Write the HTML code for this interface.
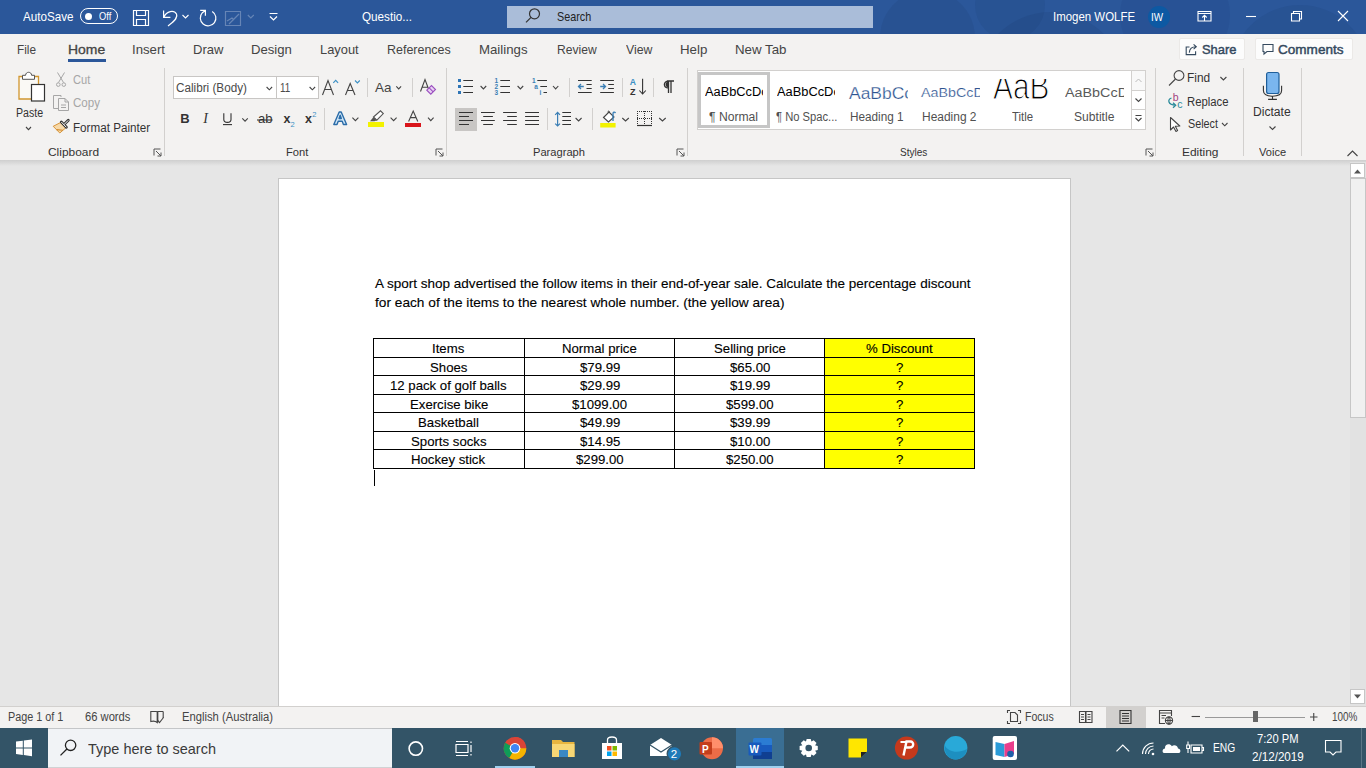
<!DOCTYPE html>
<html><head><meta charset="utf-8"><style>
*{margin:0;padding:0;box-sizing:border-box}
html,body{width:1366px;height:768px;overflow:hidden;background:#e6e6e6;font-family:"Liberation Sans",sans-serif}
.a{position:absolute}
.t{position:absolute;white-space:pre;transform-origin:0 0;font-family:"Liberation Sans",sans-serif}
.vs{position:absolute;width:1px;background:#d2d0ce}
svg{position:absolute;overflow:visible}

</style></head><body>
<div class="a" style="left:0;top:0;width:1366px;height:34px;background:#2b579a"></div>
<div class="a" style="left:0;top:0;width:1366px;height:34px;overflow:hidden">
<div class="a" style="left:880px;top:-10px;width:95px;height:95px;border-radius:50%;background:rgba(15,35,80,0.10)"></div>
<div class="a" style="left:975px;top:-30px;width:70px;height:70px;border-radius:50%;background:rgba(15,35,80,0.08)"></div>
<div class="a" style="left:976px;top:12px;width:150px;height:150px;border-radius:50%;background:rgba(15,35,80,0.10)"></div>
<div class="a" style="left:1120px;top:-40px;width:110px;height:110px;border-radius:50%;background:rgba(15,35,80,0.07)"></div>
<div class="a" style="left:1230px;top:5px;width:140px;height:140px;border-radius:50%;background:rgba(15,35,80,0.08)"></div>
</div>
<div class="a" style="left:507px;top:6px;width:366px;height:22px;background:#aabdd9"></div>
<div class="a" style="left:1147.5px;top:6px;width:22px;height:22px;border-radius:50%;background:#0d59a3"></div>
<div class="a" style="left:80px;top:8px;width:38px;height:16px;border:1.5px solid #fff;border-radius:8px"></div>
<div class="a" style="left:84.5px;top:12.5px;width:7px;height:7px;border-radius:50%;background:#fff"></div>
<div class="a" style="left:0;top:34px;width:1366px;height:126px;background:#f3f2f1"></div>
<div class="a" style="left:68px;top:59px;width:38px;height:3px;background:#2b579a"></div>
<div class="a" style="left:1179px;top:38px;width:66px;height:22px;background:#fcfcfc;border:1px solid #ebe9e7;border-radius:2px"></div>
<div class="a" style="left:1255px;top:38px;width:98px;height:22px;background:#fcfcfc;border:1px solid #ebe9e7;border-radius:2px"></div>
<div class="vs" style="left:164px;top:68px;height:88px"></div>
<div class="vs" style="left:446px;top:68px;height:88px"></div>
<div class="vs" style="left:687px;top:68px;height:88px"></div>
<div class="vs" style="left:1155px;top:68px;height:88px"></div>
<div class="vs" style="left:1243px;top:68px;height:88px"></div>
<div class="vs" style="left:1301px;top:68px;height:88px"></div>
<div class="a" style="left:173px;top:76px;width:146px;height:23px;background:#fff;border:1px solid #c8c6c4"></div>
<div class="vs" style="left:276px;top:77px;height:21px;background:#c8c6c4"></div>
<div class="vs" style="left:367px;top:78px;height:19px"></div>
<div class="vs" style="left:412px;top:78px;height:19px"></div>
<div class="vs" style="left:324px;top:108px;height:22px"></div>
<div class="vs" style="left:569px;top:78px;height:19px"></div>
<div class="vs" style="left:622px;top:78px;height:19px"></div>
<div class="vs" style="left:653px;top:78px;height:19px"></div>
<div class="vs" style="left:547px;top:108px;height:22px"></div>
<div class="vs" style="left:592px;top:108px;height:22px"></div>
<div class="a" style="left:455px;top:108px;width:22px;height:23px;background:#c8c6c4"></div>
<div class="a" style="left:697px;top:70px;width:449px;height:60px;background:#fff;border:1px solid #d2d0ce"></div>
<div class="a" style="left:698px;top:72px;width:72px;height:56px;border:3px solid #c6c6c6"></div>
<div class="a" style="left:1131px;top:70px;width:15px;height:21px;border:1px solid #d2d0ce;background:#f8f8f8"></div>
<div class="a" style="left:1131px;top:90px;width:15px;height:20px;border:1px solid #d2d0ce;background:#fff"></div>
<div class="a" style="left:1131px;top:109px;width:15px;height:21px;border:1px solid #d2d0ce;background:#fff"></div>
<div class="a" style="left:0;top:160px;width:1366px;height:6px;background:linear-gradient(#cfcfcf,#e6e6e6)"></div>
<div class="a" style="left:278px;top:178px;width:793px;height:528px;background:#fff;border:1px solid #c6c6c6;border-bottom:none"></div>
<div class="a" style="left:1350px;top:162px;width:16px;height:544px;background:#e2e2e2"></div>
<div class="a" style="left:1350px;top:163px;width:15px;height:15px;background:#fff;border:1px solid #c6c6c6"></div>
<div class="a" style="left:1350px;top:178px;width:16px;height:240px;background:#f0f0f0;border:1px solid #c6c6c6"></div>
<div class="a" style="left:1350px;top:689px;width:15px;height:15px;background:#fff;border:1px solid #c6c6c6"></div>
<div class="a" style="left:0;top:706px;width:1366px;height:22px;background:#f3f2f1;border-top:1px solid #d2d0ce"></div>
<div class="a" style="left:1106px;top:707px;width:40px;height:21px;background:#d2d0ce"></div>
<div class="a" style="left:1205px;top:717px;width:100px;height:1px;background:#999"></div>
<div class="a" style="left:1253px;top:711px;width:5px;height:11px;background:#666"></div>
<div class="a" style="left:0;top:728px;width:1366px;height:40px;background:#335467"></div>
<div class="a" style="left:48px;top:728px;width:344px;height:40px;background:#f1f3f6;border-top:1px solid #c4c6c8;border-bottom:1px solid #d0d2d4"></div>
<div class="a" style="left:736px;top:728px;width:48px;height:40px;background:#3a6e93"></div>
<div class="a" style="left:736px;top:766px;width:48px;height:2px;background:#9fd0ee"></div>
<div class="a" style="left:495px;top:766px;width:40px;height:2px;background:#9fd0ee"></div>
<div class="a" style="left:825px;top:339px;width:150px;height:130px;background:#ff0"></div>
<div id="grid"></div>
<div class="a" style="left:374px;top:470px;width:1px;height:16px;background:#000"></div>

<div class='a' style='left:373px;top:338px;width:602px;height:1px;background:#000'></div><div class='a' style='left:373px;top:357px;width:602px;height:1px;background:#000'></div><div class='a' style='left:373px;top:375px;width:602px;height:1px;background:#000'></div><div class='a' style='left:373px;top:394px;width:602px;height:1px;background:#000'></div><div class='a' style='left:373px;top:412px;width:602px;height:1px;background:#000'></div><div class='a' style='left:373px;top:431px;width:602px;height:1px;background:#000'></div><div class='a' style='left:373px;top:449px;width:602px;height:1px;background:#000'></div><div class='a' style='left:373px;top:468px;width:602px;height:1px;background:#000'></div><div class='a' style='left:373px;top:338px;width:1px;height:131px;background:#000'></div><div class='a' style='left:524px;top:338px;width:1px;height:131px;background:#000'></div><div class='a' style='left:674px;top:338px;width:1px;height:131px;background:#000'></div><div class='a' style='left:824px;top:338px;width:1px;height:131px;background:#000'></div><div class='a' style='left:974px;top:338px;width:1px;height:131px;background:#000'></div>
<svg width="1366" height="768" style="left:0;top:0"><g fill="none" stroke="#fff" stroke-width="1.2"><path d="M133.5,10.5 H148.5 V25.5 H133.5 Z M136.5,10.5 V15.5 H145.5 V10.5 M136.5,25.5 V19.5 H145.5 V25.5"/><path d="M163.6,10.5 V17.3 H170.4 M164,16.9 C166.5,11 174,9.5 176.5,14 C178,17 176,20 168,26"/><path d="M212.2,11.4 A7.8,7.8 0 1 1 202.4,12.7 L205.4,10.4 M200.2,10.4 H205.4 V15.7"/></g><path d="M182.5,15 L185.5,18 L188.5,15" fill="none" stroke="#fff" stroke-width="1.1"/><g fill="none" stroke="rgba(255,255,255,0.28)" stroke-width="1.2"><path d="M225.5,11.5 H240.5 V25.5 H225.5 Z M229,24 L239,14 M227,21 L232,18 L234,20"/></g><path d="M247.8,15 L250.8,18 L253.8,15" fill="none" stroke="rgba(255,255,255,0.28)" stroke-width="1.1"/><path d="M269.5,13.5 H277.5 M270,16.5 L273.5,20 L277,16.5" fill="none" stroke="#fff" stroke-width="1.2"/><g fill="none" stroke="#333" stroke-width="1.2"><circle cx="534.5" cy="13.8" r="5"/><path d="M531,17.3 L526,22.3"/></g><g fill="none" stroke="#fff" stroke-width="1.1"><path d="M1198,11.5 H1211 V21 H1198 Z M1198,13.5 H1211 M1204.5,20.5 V15.5 M1202.3,17.5 L1204.5,15.3 L1206.7,17.5"/><path d="M1246,16.5 H1256"/><path d="M1291.5,13.5 H1299.5 V21 H1291.5 Z M1293.5,13.5 V11.5 H1301.5 V19 H1299.5"/><path d="M1338,11 L1348,21 M1348,11 L1338,21"/></g><g fill="none" stroke="#34495e" stroke-width="1.1"><path d="M1189.5,47 H1186.2 V54.6 H1195.6 V51.2"/><path d="M1189.3,52.6 C1189.6,48.8 1192.2,46.8 1196,46.8 M1193.6,44.4 L1196.3,46.8 L1193.6,49.2"/></g><g fill="none" stroke="#34495e" stroke-width="1.1"><path d="M1263,44.5 H1273 V51.5 H1267 L1264,54 V51.5 H1263 Z"/></g><path d="M19,76.5 H38.5 V99 H19 Z" fill="#faf9f5" stroke="#d1962f" stroke-width="1.3"/><path d="M22.5,79.3 V75.3 H25.6 C25.6,71.3 31.6,71.3 31.6,75.3 H34.5 V79.3 Z" fill="#fff" stroke="#555" stroke-width="1"/><rect x="31.5" y="84.5" width="13" height="16.5" fill="#fff" stroke="#333" stroke-width="1.2"/><path d="M26,127 L28.5,129.6 L31,127" fill="none" stroke="#444" stroke-width="1.1"/><g fill="none" stroke="#a6a6a6" stroke-width="1"><path d="M57.5,72.5 L63.5,82.5 M64.5,72.5 L58.5,82.5"/><circle cx="58.3" cy="84.6" r="1.8"/><circle cx="63.8" cy="84.6" r="1.8"/></g><g fill="none" stroke="#a6a6a6" stroke-width="1"><path d="M61,97 V95.5 H53.5 V108.5 H58"/><path d="M58.5,98.5 H65 L68.5,102 V110.5 H58.5 Z M65,98.5 V102 H68.5 M61,105 H66 M61,107.5 H66"/></g><path d="M61,122.3 L66,127.6 L59.8,133 L53.2,126.3 Z" fill="#f7d9a8" stroke="#d38b2c" stroke-width="0.9" stroke-linejoin="round"/><path d="M56.5,129.6 L62.8,130.2" stroke="#d38b2c" stroke-width="1.1"/><path d="M61.3,122 L66.4,127.3 M64,124.6 L68.3,120.3" stroke="#333" stroke-width="2.8" stroke-linecap="round"/><path d="M61.6,122.3 L66.1,127 M64.2,124.4 L68,120.6" stroke="#fff" stroke-width="1" stroke-linecap="round"/><path d="M154.0,155.5 V149.0 H160.5" fill="none" stroke="#555" stroke-width="1"/><path d="M156.0,151.0 L161.0,156.0 M161.0,152.5 V156.0 H157.5" fill="none" stroke="#555" stroke-width="1"/><path d="M266.6,87 L269.35,89.8 L272.1,87" fill="none" stroke="#444" stroke-width="1.1"/><path d="M309.6,87 L312.35,89.8 L315.1,87" fill="none" stroke="#444" stroke-width="1.1"/><g fill="none" stroke="#444" stroke-width="1.1"><path d="M322.5,95 L328,80.5 L333.5,95 M324.6,89.5 H331.4"/><path d="M345.5,95 L350.2,83.5 L355,95 M347.3,90.5 H353.1"/><path d="M420.5,91.5 L425,79.5 L429.5,91.5 M422,87.3 H428"/></g><path d="M333.3,82.8 L335.7,80.3 L338.1,82.8" fill="none" stroke="#3b8fc4" stroke-width="1.1"/><path d="M355,80.5 L357.4,83 L359.8,80.5" fill="none" stroke="#3b8fc4" stroke-width="1.1"/><text x="375" y="92.2" font-family="Liberation Sans" font-size="13.5" fill="#444" textLength="16.5" lengthAdjust="spacingAndGlyphs">Aa</text><path d="M396.3,86.3 L398.7,88.89999999999999 L401.1,86.3" fill="none" stroke="#444" stroke-width="1.1"/><path d="M426.8,90.2 L431.5,85.5 L435.5,89.5 L430.8,94.2 Z" fill="#e9d3f3" stroke="#9b4fc0" stroke-width="1.1"/><path d="M429.2,87.8 L433.2,91.8" stroke="#9b4fc0" stroke-width="1.1"/><path d="M436.0,155.5 V149.0 H442.5" fill="none" stroke="#555" stroke-width="1"/><path d="M438.0,151.0 L443.0,156.0 M443.0,152.5 V156.0 H439.5" fill="none" stroke="#555" stroke-width="1"/><text x="180.3" y="123" font-family="Liberation Sans" font-weight="700" font-size="13" fill="#333">B</text><text x="203.2" y="123" font-family="Liberation Serif" font-style="italic" font-size="14" fill="#333">I</text><g fill="none" stroke="#333" stroke-width="1.1"><path d="M223.8,113.3 V119.5 C223.8,123.3 231,123.3 231,119.5 V113.3"/><path d="M223,124.6 H232"/></g><path d="M242.3,118.3 L245.05,121.1 L247.8,118.3" fill="none" stroke="#444" stroke-width="1.1"/><text x="258" y="123" font-family="Liberation Sans" font-size="13" fill="#333">ab</text><path d="M257,120 H272.5" stroke="#333" stroke-width="1.1"/><text x="283.4" y="123" font-family="Liberation Sans" font-weight="700" font-size="12.5" fill="#333">x</text><text x="290.4" y="127.3" font-family="Liberation Sans" font-size="7.5" fill="#3b8fc4">2</text><text x="305" y="123" font-family="Liberation Sans" font-weight="700" font-size="12.5" fill="#333">x</text><text x="312.3" y="116.5" font-family="Liberation Sans" font-size="7.5" fill="#3b8fc4">2</text><path d="M333.8,124.5 L339.2,112 H341.2 L346.6,124.5 H343.4 L342.2,121.3 H338.2 L337,124.5 Z M339.1,118.5 H341.3 L340.2,115.3 Z" fill="#cfe6f7" stroke="#2b6ca8" stroke-width="1.4" stroke-linejoin="round"/><path d="M352.4,117.6 L355.4,120.6 L358.4,117.6" fill="none" stroke="#444" stroke-width="1.1"/><path d="M373.5,117 L380.5,110.8 L383.3,113.6 L376.8,120.2 Z" fill="#fff" stroke="#555" stroke-width="1.1"/><path d="M373.5,117 L370,121.2 H374.5 L376.8,120.2 Z" fill="#555"/><rect x="368" y="122" width="16" height="5" fill="#f2f200"/><path d="M390.6,117.6 L393.6,120.6 L396.6,117.6" fill="none" stroke="#444" stroke-width="1.1"/><path d="M408.6,121.5 L413.2,111 L417.8,121.5 M410.3,117.6 H416.1" fill="none" stroke="#444" stroke-width="1.1"/><rect x="405" y="123" width="16" height="4" fill="#d9151b"/><path d="M428,117.6 L430.8,120.6 L433.6,117.6" fill="none" stroke="#444" stroke-width="1.1"/><g fill="#2e75b6"><rect x="458" y="79" width="3" height="3"/><rect x="458" y="85" width="3" height="3"/><rect x="458" y="91" width="3" height="3"/></g><g stroke="#333" stroke-width="1.1" fill="none"><path d="M463.3,80.5 H473 M463.3,86.5 H473 M463.3,92.5 H473"/><path d="M500.3,80.5 H510 M500.3,86.5 H510 M500.3,92.5 H510"/><path d="M537.3,80.5 H547 M540.3,86.5 H547 M543.5,92.5 H547"/></g><g font-family="Liberation Sans" font-size="6.5" fill="#3b7fb5" font-weight="700"><text x="494.5" y="82.7">1</text><text x="494.5" y="88.7">2</text><text x="494.5" y="94.7">3</text><text x="532" y="82.7">1</text><text x="534.2" y="88.7">a</text><text x="539.6" y="94.7">i</text></g><path d="M480.6,86 L483.40000000000003,88.9 L486.20000000000005,86" fill="none" stroke="#444" stroke-width="1.1"/><path d="M517.6,86 L520.4,88.9 L523.2,86" fill="none" stroke="#444" stroke-width="1.1"/><path d="M553,86 L555.65,88.9 L558.3,86" fill="none" stroke="#444" stroke-width="1.1"/><g stroke="#333" stroke-width="1.1" fill="none"><path d="M578,80.5 H591.7 M586.5,84.5 H591.7 M586.5,88.5 H591.7 M578,92.5 H591.7"/><path d="M600.2,80.5 H613.9 M608.2,84.5 H613.9 M608.2,88.5 H613.9 M600.2,92.5 H613.9"/></g><g stroke="#3b7fb5" stroke-width="1.3" fill="none"><path d="M583.8,86.5 H578.5 M581,84 L578.5,86.5 L581,89"/><path d="M600.2,86.5 H605.5 M603,84 L605.5,86.5 L603,89"/></g><text x="629.8" y="85.4" font-family="Liberation Sans" font-size="8.6" font-weight="700" fill="#3b8fc4">A</text><text x="630" y="94.5" font-family="Liberation Sans" font-size="9" font-weight="700" fill="#333">Z</text><path d="M642.6,78.8 V94 M639.4,90.5 L642.6,94 L645.8,90.5" fill="none" stroke="#333" stroke-width="1.1"/><path d="M667,81 H674 M671,81 V93 M668.5,81 V93 M668.5,81.2 C663,81 663,88 668.5,88" fill="none" stroke="#333" stroke-width="1.3"/><path d="M668.5,81.5 C664.5,81.5 664.5,87.5 668.5,87.5 Z" fill="#333"/><g stroke="#333" stroke-width="1.1" fill="none"><path d="M459,112.5 H473 M459,116.5 H469 M459,120.5 H473 M459,124.5 H469"/><path d="M481,112.5 H494.8 M483.2,116.5 H492.9 M481,120.5 H494.8 M483.2,124.5 H492.9"/><path d="M503.1,112.5 H516.8 M507.2,116.5 H516.8 M503.1,120.5 H516.8 M507.2,124.5 H516.8"/><path d="M525.1,112.5 H539 M525.1,116.5 H539 M525.1,120.5 H539 M525.1,124.5 H539"/><path d="M562.3,112.5 H571 M562.3,116.5 H571 M562.3,120.5 H571 M562.3,124.5 H571"/></g><path d="M557.6,112.5 V126 M555.2,114.8 L557.6,112.3 L560,114.8 M555.2,123.6 L557.6,126 L560,123.6" fill="none" stroke="#3b7fb5" stroke-width="1.2"/><path d="M575.6,118 L578.6,121 L581.6,118" fill="none" stroke="#444" stroke-width="1.1"/><path d="M603.5,117.5 L609,112 L614,117 L608.5,122 Z" fill="#fff" stroke="#444" stroke-width="1.1"/><path d="M608,112.5 C607.8,110.5 609.5,110.5 609.5,112.5" fill="none" stroke="#444"/><path d="M613,121 V114 C613,112 614.5,111.5 615.5,113" fill="none" stroke="#3b7fb5" stroke-width="1.4"/><rect x="600.2" y="123" width="15.4" height="4.5" fill="#f2f200"/><path d="M622.3,118 L625.55,121 L628.8,118" fill="none" stroke="#444" stroke-width="1.1"/><rect x="637" y="111.0" width="1" height="1" fill="#333"/><rect x="639" y="111.0" width="1" height="1" fill="#333"/><rect x="641" y="111.0" width="1" height="1" fill="#333"/><rect x="643" y="111.0" width="1" height="1" fill="#333"/><rect x="645" y="111.0" width="1" height="1" fill="#333"/><rect x="647" y="111.0" width="1" height="1" fill="#333"/><rect x="649" y="111.0" width="1" height="1" fill="#333"/><rect x="651" y="111.0" width="1" height="1" fill="#333"/><rect x="637" y="118.0" width="1" height="1" fill="#333"/><rect x="639" y="118.0" width="1" height="1" fill="#333"/><rect x="641" y="118.0" width="1" height="1" fill="#333"/><rect x="643" y="118.0" width="1" height="1" fill="#333"/><rect x="645" y="118.0" width="1" height="1" fill="#333"/><rect x="647" y="118.0" width="1" height="1" fill="#333"/><rect x="649" y="118.0" width="1" height="1" fill="#333"/><rect x="651" y="118.0" width="1" height="1" fill="#333"/><rect x="637.0" y="111" width="1" height="1" fill="#333"/><rect x="637.0" y="113" width="1" height="1" fill="#333"/><rect x="637.0" y="115" width="1" height="1" fill="#333"/><rect x="637.0" y="117" width="1" height="1" fill="#333"/><rect x="637.0" y="119" width="1" height="1" fill="#333"/><rect x="637.0" y="121" width="1" height="1" fill="#333"/><rect x="637.0" y="123" width="1" height="1" fill="#333"/><rect x="644.0" y="111" width="1" height="1" fill="#333"/><rect x="644.0" y="113" width="1" height="1" fill="#333"/><rect x="644.0" y="115" width="1" height="1" fill="#333"/><rect x="644.0" y="117" width="1" height="1" fill="#333"/><rect x="644.0" y="119" width="1" height="1" fill="#333"/><rect x="644.0" y="121" width="1" height="1" fill="#333"/><rect x="644.0" y="123" width="1" height="1" fill="#333"/><rect x="651.0" y="111" width="1" height="1" fill="#333"/><rect x="651.0" y="113" width="1" height="1" fill="#333"/><rect x="651.0" y="115" width="1" height="1" fill="#333"/><rect x="651.0" y="117" width="1" height="1" fill="#333"/><rect x="651.0" y="119" width="1" height="1" fill="#333"/><rect x="651.0" y="121" width="1" height="1" fill="#333"/><rect x="651.0" y="123" width="1" height="1" fill="#333"/><path d="M637,125.5 H652" stroke="#333" stroke-width="1.2"/><path d="M659.2,118 L662.45,121 L665.7,118" fill="none" stroke="#444" stroke-width="1.1"/><path d="M677.0,155.5 V149.0 H683.5" fill="none" stroke="#555" stroke-width="1"/><path d="M679.0,151.0 L684.0,156.0 M684.0,152.5 V156.0 H680.5" fill="none" stroke="#555" stroke-width="1"/><path d="M1135.5,82 L1138.5,79 L1141.5,82" fill="none" stroke="#bbb" stroke-width="1"/><path d="M1135.5,98.5 L1138.5,101.5 L1141.5,98.5" fill="none" stroke="#444" stroke-width="1.1"/><path d="M1135.5,115.5 H1141.5 M1135.5,118 L1138.5,121 L1141.5,118" fill="none" stroke="#444" stroke-width="1.1"/><path d="M1146.0,155.5 V149.0 H1152.5" fill="none" stroke="#555" stroke-width="1"/><path d="M1148.0,151.0 L1153.0,156.0 M1153.0,152.5 V156.0 H1149.5" fill="none" stroke="#555" stroke-width="1"/><g fill="none" stroke="#444" stroke-width="1.1"><circle cx="1179" cy="75.5" r="4.9"/><path d="M1175.5,79 L1169,85.5"/></g><path d="M1220.4,77 L1223.4,80 L1226.4,77" fill="none" stroke="#444" stroke-width="1.1"/><text x="1172.8" y="100.6" font-family="Liberation Sans" font-size="10.5" fill="#a3427e">b</text><text x="1177.2" y="108.4" font-family="Liberation Sans" font-size="10.5" fill="#2a8a9a">c</text><path d="M1171.5,98 C1167.5,99.5 1167.5,104.8 1175.5,105.3 M1173,102.8 L1175.7,105.3 L1173,107.8" fill="none" stroke="#2a8a9a" stroke-width="1.3"/><path d="M1170.5,117.5 V130 L1173.5,127 L1176,131.5 L1177.6,130.6 L1175.3,126.3 L1179.8,126 Z" fill="#fff" stroke="#444" stroke-width="1.1" stroke-linejoin="round"/><path d="M1222,123 L1224.75,125.8 L1227.5,123" fill="none" stroke="#444" stroke-width="1.1"/><rect x="1266.6" y="72.5" width="12.4" height="21" rx="2" fill="#7ab6ee" stroke="#1f5f9a" stroke-width="1.2"/><path d="M1263.4,85.8 V90.5 C1263.4,94.6 1266,96.2 1272.5,96.2 C1279,96.2 1281.6,94.6 1281.6,90.5 V85.8 M1272.5,96.2 V99.4 M1268.1,99.4 H1276.9" fill="none" stroke="#333" stroke-width="1.1"/><path d="M1269.5,126.5 L1272.5,129.5 L1275.5,126.5" fill="none" stroke="#444" stroke-width="1.1"/><path d="M1347.5,156 L1352.5,151 L1357.5,156" fill="none" stroke="#444" stroke-width="1.1"/><path d="M1354,173.5 L1357.5,169.5 L1361,173.5 Z" fill="#555"/><path d="M1354,694.5 L1357.5,698.5 L1361,694.5 Z" fill="#555"/><g fill="none" stroke="#444" stroke-width="1.1"><path d="M150.8,711.5 H156.5 C157,711.5 157.2,712.5 157.2,713 V722.5 C155.5,721 152.5,721 150.8,721.5 Z M163.2,711.5 H157.8 V722.5 M163.2,711.5 V718"/><path d="M157.5,720 L159.5,722.5 L163.5,717.5"/></g><g fill="none" stroke="#444" stroke-width="1.1"><path d="M1007.5,713 V710.5 H1010 M1018,710.5 H1020.5 V713 M1020.5,721 V723.5 H1018 M1010,723.5 H1007.5 V721"/><path d="M1010.5,712.5 H1015 L1017.5,715 V721.5 H1010.5 Z"/></g><g fill="none" stroke="#444" stroke-width="1.1"><path d="M1079.5,711.5 H1085.5 V722.5 H1079.5 Z M1086,711.5 H1092 V722.5 H1086 Z M1081,714.5 H1084 M1081,717 H1084 M1081,719.5 H1084 M1087.5,714.5 H1090.5 M1087.5,717 H1090.5 M1087.5,719.5 H1090.5"/></g><g fill="none" stroke="#333" stroke-width="1.1"><path d="M1120,710.5 H1131 V723.5 H1120 Z M1122,713.5 H1129 M1122,716 H1129 M1122,718.5 H1129 M1122,721 H1129"/></g><g fill="none" stroke="#444" stroke-width="1.1"><path d="M1165,723.5 H1159.5 V710.5 H1171.5 V716 M1159.5,713 H1171.5 M1161.5,715.5 H1166 M1161.5,718 H1164.5"/><circle cx="1169" cy="720.5" r="3.6"/><path d="M1165.4,720.5 H1172.6 M1169,716.9 C1167.4,718.5 1167.4,722.5 1169,724.1 C1170.6,722.5 1170.6,718.5 1169,716.9"/></g><path d="M1191.6,716.5 H1200" stroke="#444" stroke-width="1.1"/><path d="M1310,717 H1317.5 M1313.75,713 V721" stroke="#444" stroke-width="1.1"/><g fill="#fff"><path d="M16,741.6 L22.8,740.7 V747.4 H16 Z M23.8,740.5 L32,739.4 V747.4 H23.8 Z M16,748.4 H22.8 V755 L16,754.1 Z M23.8,748.4 H32 V756.2 L23.8,755.1 Z"/></g><g fill="none" stroke="#222" stroke-width="1.3"><circle cx="70.6" cy="745.3" r="5.2"/><path d="M66.9,749 L60.5,755.4"/></g><circle cx="415.8" cy="748.6" r="6.7" fill="none" stroke="#fff" stroke-width="1.6"/><g fill="none" stroke="#fff" stroke-width="1.2"><path d="M456,744.5 H468 V752.5 H456 Z M456,741.5 H468 M456,755.5 H468 M471,741.5 V743 M471,745 V752 M471,754 V755.5"/></g><g><circle cx="515" cy="748.3" r="11.3" fill="#db4437"/><path d="M515,748.3 L505.2,742.65 A11.3,11.3 0 0 0 509.35,758.09 Z" fill="#0f9d58"/><path d="M515,748.3 L509.35,758.09 A11.3,11.3 0 0 0 526.3,748.3 Z" fill="#f4b400"/><path d="M515,737 A11.3,11.3 0 0 1 524.8,742.65 L515,742.65 Z" fill="#db4437"/><circle cx="515" cy="748.3" r="5.3" fill="#fff"/><circle cx="515" cy="748.3" r="4.2" fill="#4285f4"/></g><path d="M552,740 H561 L563,742 H574.5 V757 H552 Z" fill="#e8b53f"/><path d="M552,744 H574.5 V757 H552 Z" fill="#f8d775"/><rect x="559" y="750" width="9" height="7" fill="#3b88c3"/><path d="M602,743 H622 V759 H602 Z" fill="#fff"/><path d="M607.5,743 V740 C607.5,736 616.5,736 616.5,740 V743" fill="none" stroke="#fff" stroke-width="1.3"/><rect x="607" y="746" width="4.5" height="4.5" fill="#f25022"/><rect x="612.5" y="746" width="4.5" height="4.5" fill="#7fba00"/><rect x="607" y="751.5" width="4.5" height="4.5" fill="#00a4ef"/><rect x="612.5" y="751.5" width="4.5" height="4.5" fill="#ffb900"/><path d="M650,745 L661,738 L672,745 V756 H650 Z" fill="#fff"/><path d="M650,745 L661,752 L672,745" fill="none" stroke="#335467" stroke-width="1.2"/><circle cx="674.5" cy="753.8" r="7.3" fill="#1f7ab8" stroke="#335467" stroke-width="1.4"/><text x="670.7" y="758.2" font-family="Liberation Sans" font-size="11.5" fill="#fff">2</text><circle cx="712" cy="748.3" r="11" fill="#ed6c47"/><path d="M712,737.3 A11,11 0 0 1 723,748.3 H712 Z" fill="#ff8f6b"/><rect x="699.5" y="742" width="12.5" height="12.5" rx="1" fill="#c43e1c"/><text x="702" y="752.5" font-family="Liberation Sans" font-weight="700" font-size="10" fill="#fff">P</text><rect x="753" y="738" width="19" height="21" rx="1.5" fill="#2b7cd3"/><rect x="753" y="745" width="19" height="7" fill="#185abd"/><rect x="753" y="752" width="19" height="7" fill="#103f91"/><rect x="748.5" y="742.5" width="13" height="13" rx="1" fill="#185abd"/><text x="749.6" y="752.8" font-family="Liberation Sans" font-weight="700" font-size="10" fill="#fff">W</text><path d="M817.78,745.97 L817.78,750.03 L814.91,750.77 L815.05,750.43 L816.55,752.98 L813.68,755.85 L811.13,754.35 L811.47,754.21 L810.73,757.08 L806.67,757.08 L805.93,754.21 L806.27,754.35 L803.72,755.85 L800.85,752.98 L802.35,750.43 L802.49,750.77 L799.62,750.03 L799.62,745.97 L802.49,745.23 L802.35,745.57 L800.85,743.02 L803.72,740.15 L806.27,741.65 L805.93,741.79 L806.67,738.92 L810.73,738.92 L811.47,741.79 L811.13,741.65 L813.68,740.15 L816.55,743.02 L815.05,745.57 L814.91,745.23 Z" fill="#fff"/><circle cx="808.7" cy="748" r="3.3" fill="#335467"/><path d="M848.5,738.5 H867 V752 L861,757.5 H848.5 Z" fill="#ffe600"/><path d="M867,752 L861,757.5 V752 Z" fill="#222"/><path d="M861,757.5 L867,751.5 V757.5 Z" fill="#335467"/><circle cx="906.5" cy="748" r="11.6" fill="#c5391c"/><path d="M903.5,755.5 L906.5,741.5 H910.5 C914,741.5 914.5,747.5 909.5,747.5 H905.8" fill="none" stroke="#fff" stroke-width="2.4"/><path d="M900.5,742 H907" stroke="#fff" stroke-width="2"/><circle cx="955.7" cy="747.8" r="11.7" fill="#29a9d8"/><path d="M944.5,745 C948,752 958,754 967,749 C966,756 960,759.5 955.7,759.5 C949,759.5 944,754 944.5,745 Z" fill="#1d8fc0"/><rect x="992.7" y="736" width="24.3" height="24" rx="2" fill="#fff"/><path d="M995.5,742 L1004.5,744 V757 L995.5,755 Z" fill="#2a9bd8"/><path d="M1004.5,744 L1014,741 V754 L1004.5,757 Z" fill="#e83e8c"/><circle cx="1010.5" cy="754" r="3.3" fill="#1f5fa8"/><path d="M1116.5,751.4 L1122.8,745 L1129.2,751.4" fill="none" stroke="#fff" stroke-width="1.2"/><g fill="none" stroke="#fff" stroke-width="1.1"><path d="M1142.5,754 A11,11 0 0 1 1153.5,743"/><path d="M1145.5,754 A8,8 0 0 1 1153.5,746"/><path d="M1148.5,754 A5,5 0 0 1 1153.5,749"/></g><circle cx="1153" cy="754" r="1.3" fill="#fff"/><path d="M1164,753 H1179 C1181,753 1181,748.5 1178,748.5 C1177.5,745.5 1174,744.3 1171.8,746.3 C1170,743 1164.5,744 1165,748.5 C1162,748.5 1162,753 1164,753 Z" fill="#fff"/><g fill="none" stroke="#fff" stroke-width="1.1"><path d="M1191,745 H1202 V753 H1191 Z M1202,747.5 H1203.5 V750.5 H1202"/><path d="M1188,741.5 V745 M1186.7,745 H1189.5 V748.5 H1186.7 Z M1188,748.5 V753"/></g><rect x="1193" y="747" width="7" height="4" fill="#fff"/><path d="M1325.5,740.5 H1341 V752 H1336 L1333,755 L1330,752 H1325.5 Z" fill="none" stroke="#fff" stroke-width="1.1"/><path d="M1361.5,728 V768" stroke="#5a7686" stroke-width="1"/></svg>
<div class='t' style='left:23.10px;top:9.95px;font-size:13px;line-height:13px;color:#fff;font-weight:400;transform:scaleX(0.8959);font-family:"Liberation Sans";'>AutoSave</div>
<div class='t' style='left:99.00px;top:11.15px;font-size:11px;line-height:11px;color:#fff;font-weight:400;transform:scaleX(0.8434);font-family:"Liberation Sans";'>Off</div>
<div class='t' style='left:362.00px;top:9.95px;font-size:13px;line-height:13px;color:#fff;font-weight:400;transform:scaleX(0.8996);font-family:"Liberation Sans";'>Questio...</div>
<div class='t' style='left:556.50px;top:9.95px;font-size:13px;line-height:13px;color:#222;font-weight:400;transform:scaleX(0.8301);font-family:"Liberation Sans";'>Search</div>
<div class='t' style='left:1052.62px;top:9.95px;font-size:13px;line-height:13px;color:#fff;font-weight:400;transform:scaleX(0.8808);font-family:"Liberation Sans";'>Imogen WOLFE</div>
<div class='t' style='left:1151.40px;top:11.65px;font-size:11px;line-height:11px;color:#fff;font-weight:400;transform:scaleX(0.8961);font-family:"Liberation Sans";'>IW</div>
<div class='t' style='left:16.79px;top:42.95px;font-size:13px;line-height:13px;color:#444;font-weight:400;transform:scaleX(0.9078);font-family:"Liberation Sans";'>File</div>
<div class='t' style='left:67.53px;top:42.95px;font-size:13px;line-height:13px;color:#444;font-weight:400;transform:scaleX(1.0703);font-family:"Liberation Sans";-webkit-text-stroke:0.3px #444'>Home</div>
<div class='t' style='left:131.58px;top:42.95px;font-size:13px;line-height:13px;color:#444;font-weight:400;transform:scaleX(1.0156);font-family:"Liberation Sans";'>Insert</div>
<div class='t' style='left:193.00px;top:42.95px;font-size:13px;line-height:13px;color:#444;font-weight:400;transform:scaleX(1.0018);font-family:"Liberation Sans";'>Draw</div>
<div class='t' style='left:250.99px;top:42.95px;font-size:13px;line-height:13px;color:#444;font-weight:400;transform:scaleX(1.0093);font-family:"Liberation Sans";'>Design</div>
<div class='t' style='left:320.01px;top:42.95px;font-size:13px;line-height:13px;color:#444;font-weight:400;transform:scaleX(0.9891);font-family:"Liberation Sans";'>Layout</div>
<div class='t' style='left:387.34px;top:42.95px;font-size:13px;line-height:13px;color:#444;font-weight:400;transform:scaleX(0.9594);font-family:"Liberation Sans";'>References</div>
<div class='t' style='left:479.48px;top:42.95px;font-size:13px;line-height:13px;color:#444;font-weight:400;transform:scaleX(1.0173);font-family:"Liberation Sans";'>Mailings</div>
<div class='t' style='left:557.47px;top:42.95px;font-size:13px;line-height:13px;color:#444;font-weight:400;transform:scaleX(0.9305);font-family:"Liberation Sans";'>Review</div>
<div class='t' style='left:626.00px;top:42.95px;font-size:13px;line-height:13px;color:#444;font-weight:400;transform:scaleX(0.9456);font-family:"Liberation Sans";'>View</div>
<div class='t' style='left:680.38px;top:42.95px;font-size:13px;line-height:13px;color:#444;font-weight:400;transform:scaleX(1.0233);font-family:"Liberation Sans";'>Help</div>
<div class='t' style='left:734.98px;top:42.95px;font-size:13px;line-height:13px;color:#444;font-weight:400;transform:scaleX(1.0233);font-family:"Liberation Sans";'>New Tab</div>
<div class='t' style='left:1201.80px;top:43.25px;font-size:13px;line-height:13px;color:#34495e;font-weight:400;transform:scaleX(0.9925);font-family:"Liberation Sans";-webkit-text-stroke:0.45px #34495e'>Share</div>
<div class='t' style='left:1278.00px;top:43.25px;font-size:13px;line-height:13px;color:#34495e;font-weight:400;transform:scaleX(1.0419);font-family:"Liberation Sans";-webkit-text-stroke:0.45px #34495e'>Comments</div>
<div class='t' style='left:15.60px;top:106.80px;font-size:12px;line-height:12px;color:#333;font-weight:400;transform:scaleX(0.8835);font-family:"Liberation Sans";'>Paste</div>
<div class='t' style='left:72.60px;top:74.10px;font-size:12px;line-height:12px;color:#a6a6a6;font-weight:400;transform:scaleX(0.9256);font-family:"Liberation Sans";'>Cut</div>
<div class='t' style='left:72.60px;top:97.10px;font-size:12px;line-height:12px;color:#a6a6a6;font-weight:400;transform:scaleX(0.9638);font-family:"Liberation Sans";'>Copy</div>
<div class='t' style='left:72.60px;top:121.80px;font-size:12px;line-height:12px;color:#333;font-weight:400;transform:scaleX(0.9715);font-family:"Liberation Sans";'>Format Painter</div>
<div class='t' style='left:48.40px;top:146.62px;font-size:11.5px;line-height:11.5px;color:#333;font-weight:400;transform:scaleX(1.0363);font-family:"Liberation Sans";'>Clipboard</div>
<div class='t' style='left:176.40px;top:81.60px;font-size:12px;line-height:12px;color:#4a4a4a;font-weight:400;transform:scaleX(0.9754);font-family:"Liberation Sans";'>Calibri (Body)</div>
<div class='t' style='left:279.50px;top:81.60px;font-size:12px;line-height:12px;color:#4a4a4a;font-weight:400;transform:scaleX(0.8214);font-family:"Liberation Sans";'>11</div>
<div class='t' style='left:285.50px;top:146.62px;font-size:11.5px;line-height:11.5px;color:#333;font-weight:400;transform:scaleX(0.9699);font-family:"Liberation Sans";'>Font</div>
<div class='t' style='left:532.70px;top:146.62px;font-size:11.5px;line-height:11.5px;color:#333;font-weight:400;transform:scaleX(0.9680);font-family:"Liberation Sans";'>Paragraph</div>
<div class='t' style='left:900.00px;top:146.62px;font-size:11.5px;line-height:11.5px;color:#333;font-weight:400;transform:scaleX(0.8744);font-family:"Liberation Sans";'>Styles</div>
<div class='t' style='left:1181.60px;top:146.62px;font-size:11.5px;line-height:11.5px;color:#333;font-weight:400;transform:scaleX(1.0383);font-family:"Liberation Sans";'>Editing</div>
<div class='t' style='left:1259.00px;top:146.62px;font-size:11.5px;line-height:11.5px;color:#333;font-weight:400;transform:scaleX(0.9626);font-family:"Liberation Sans";'>Voice</div>
<div class='a' style='left:0;top:0;width:762.7px;height:768px;overflow:hidden'><div class='t' style='left:704.80px;top:86.40px;font-size:12px;line-height:12px;color:#000;font-weight:400;transform:scaleX(1.0684);font-family:"Liberation Sans";'>AaBbCcDc</div></div>
<div class='a' style='left:0;top:0;width:834.8px;height:768px;overflow:hidden'><div class='t' style='left:776.70px;top:86.40px;font-size:12px;line-height:12px;color:#000;font-weight:400;transform:scaleX(1.0701);font-family:"Liberation Sans";'>AaBbCcDc</div></div>
<div class='a' style='left:0;top:0;width:907.5px;height:768px;overflow:hidden'><div class='t' style='left:849.00px;top:85.60px;font-size:16px;line-height:16px;color:#2e5491;font-weight:400;transform:scaleX(1.0904);font-family:"Liberation Sans";-webkit-text-stroke:0.25px #fff'>AaBbCc</div></div>
<div class='a' style='left:0;top:0;width:979.5px;height:768px;overflow:hidden'><div class='t' style='left:921.00px;top:85.73px;font-size:13.5px;line-height:13.5px;color:#2e5491;font-weight:400;transform:scaleX(1.0584);font-family:"Liberation Sans";-webkit-text-stroke:0.2px #fff'>AaBbCcD</div></div>
<div class='t' style='left:992.90px;top:68.60px;font-size:36px;line-height:36px;color:#000;font-weight:400;transform:scaleX(0.8294);font-family:"Liberation Sans";clip-path:inset(calc(79px - 68.6px) 0 0 0);-webkit-text-stroke:1.2px #fff'>AaB</div>
<div class='a' style='left:0;top:0;width:1124px;height:768px;overflow:hidden'><div class='t' style='left:1064.60px;top:87.00px;font-size:12px;line-height:12px;color:#5a5a5a;font-weight:400;transform:scaleX(1.1957);font-family:"Liberation Sans";'>AaBbCcD</div></div>
<div class='t' style='left:709.40px;top:110.58px;font-size:12.5px;line-height:12.5px;color:#505050;font-weight:400;transform:scaleX(0.9720);font-family:"Liberation Sans";'>¶ Normal</div>
<div class='t' style='left:775.50px;top:110.58px;font-size:12.5px;line-height:12.5px;color:#505050;font-weight:400;transform:scaleX(0.8961);font-family:"Liberation Sans";'>¶ No Spac...</div>
<div class='t' style='left:850.36px;top:110.58px;font-size:12.5px;line-height:12.5px;color:#505050;font-weight:400;transform:scaleX(0.9405);font-family:"Liberation Sans";'>Heading 1</div>
<div class='t' style='left:922.44px;top:110.58px;font-size:12.5px;line-height:12.5px;color:#505050;font-weight:400;transform:scaleX(0.9565);font-family:"Liberation Sans";'>Heading 2</div>
<div class='t' style='left:1012.00px;top:110.58px;font-size:12.5px;line-height:12.5px;color:#505050;font-weight:400;transform:scaleX(0.9138);font-family:"Liberation Sans";'>Title</div>
<div class='t' style='left:1073.60px;top:110.58px;font-size:12.5px;line-height:12.5px;color:#505050;font-weight:400;transform:scaleX(0.9679);font-family:"Liberation Sans";'>Subtitle</div>
<div class='t' style='left:1186.65px;top:72.08px;font-size:12.5px;line-height:12.5px;color:#333;font-weight:400;transform:scaleX(0.9502);font-family:"Liberation Sans";'>Find</div>
<div class='t' style='left:1186.69px;top:95.58px;font-size:12.5px;line-height:12.5px;color:#333;font-weight:400;transform:scaleX(0.9063);font-family:"Liberation Sans";'>Replace</div>
<div class='t' style='left:1187.60px;top:118.18px;font-size:12.5px;line-height:12.5px;color:#333;font-weight:400;transform:scaleX(0.8620);font-family:"Liberation Sans";'>Select</div>
<div class='t' style='left:1253.43px;top:106.38px;font-size:12.5px;line-height:12.5px;color:#333;font-weight:400;transform:scaleX(0.9696);font-family:"Liberation Sans";'>Dictate</div>
<div class='t' style='left:7.70px;top:710.70px;font-size:12px;line-height:12px;color:#444;font-weight:400;transform:scaleX(0.9010);font-family:"Liberation Sans";'>Page 1 of 1</div>
<div class='t' style='left:84.60px;top:710.70px;font-size:12px;line-height:12px;color:#444;font-weight:400;transform:scaleX(0.9324);font-family:"Liberation Sans";'>66 words</div>
<div class='t' style='left:182.30px;top:710.70px;font-size:12px;line-height:12px;color:#444;font-weight:400;transform:scaleX(0.9356);font-family:"Liberation Sans";'>English (Australia)</div>
<div class='t' style='left:1024.60px;top:710.70px;font-size:12px;line-height:12px;color:#444;font-weight:400;transform:scaleX(0.8783);font-family:"Liberation Sans";'>Focus</div>
<div class='t' style='left:1332.00px;top:710.70px;font-size:12px;line-height:12px;color:#444;font-weight:400;transform:scaleX(0.8252);font-family:"Liberation Sans";'>100%</div>
<div class='t' style='left:88.40px;top:740.75px;font-size:15px;line-height:15px;color:#3a3a3a;font-weight:400;transform:scaleX(0.9650);font-family:"Liberation Sans";'>Type here to search</div>
<div class='t' style='left:1213.30px;top:741.60px;font-size:12px;line-height:12px;color:#fff;font-weight:400;transform:scaleX(0.8570);font-family:"Liberation Sans";'>ENG</div>
<div class='t' style='left:1257.40px;top:733.00px;font-size:12px;line-height:12px;color:#fff;font-weight:400;transform:scaleX(0.9308);font-family:"Liberation Sans";'>7:20 PM</div>
<div class='t' style='left:1251.90px;top:750.50px;font-size:12px;line-height:12px;color:#fff;font-weight:400;transform:scaleX(0.9700);font-family:"Liberation Sans";'>2/12/2019</div>
<div class='t' style='left:374.50px;top:276.81px;font-size:13.4px;line-height:13.4px;color:#000;font-weight:400;transform:scaleX(1.0088);font-family:"Liberation Sans";-webkit-text-stroke:0.12px #000'>A sport shop advertised the follow items in their end-of-year sale. Calculate the percentage discount</div>
<div class='t' style='left:374.50px;top:295.71px;font-size:13.4px;line-height:13.4px;color:#000;font-weight:400;transform:scaleX(1.0225);font-family:"Liberation Sans";-webkit-text-stroke:0.12px #000'>for each of the items to the nearest whole number. (the yellow area)</div>
<div class='t' style='left:432.23px;top:342.21px;font-size:13.4px;line-height:13.4px;color:#000;font-weight:400;transform:scaleX(0.9850);font-family:"Liberation Sans";-webkit-text-stroke:0.12px #000'>Items</div>
<div class='t' style='left:561.85px;top:342.21px;font-size:13.4px;line-height:13.4px;color:#000;font-weight:400;transform:scaleX(0.9850);font-family:"Liberation Sans";-webkit-text-stroke:0.12px #000'>Normal price</div>
<div class='t' style='left:713.80px;top:342.21px;font-size:13.4px;line-height:13.4px;color:#000;font-weight:400;transform:scaleX(0.9850);font-family:"Liberation Sans";-webkit-text-stroke:0.12px #000'>Selling price</div>
<div class='t' style='left:866.01px;top:342.21px;font-size:13.4px;line-height:13.4px;color:#000;font-weight:400;transform:scaleX(0.9850);font-family:"Liberation Sans";-webkit-text-stroke:0.12px #000'>% Discount</div>
<div class='t' style='left:430.15px;top:360.71px;font-size:13.4px;line-height:13.4px;color:#000;font-weight:400;transform:scaleX(0.9850);font-family:"Liberation Sans";-webkit-text-stroke:0.12px #000'>Shoes</div>
<div class='t' style='left:579.55px;top:360.71px;font-size:13.4px;line-height:13.4px;color:#000;font-weight:400;transform:scaleX(0.9850);font-family:"Liberation Sans";-webkit-text-stroke:0.12px #000'>$79.99</div>
<div class='t' style='left:729.55px;top:360.71px;font-size:13.4px;line-height:13.4px;color:#000;font-weight:400;transform:scaleX(0.9850);font-family:"Liberation Sans";-webkit-text-stroke:0.12px #000'>$65.00</div>
<div class='t' style='left:896.05px;top:360.71px;font-size:13.4px;line-height:13.4px;color:#000;font-weight:400;transform:scaleX(0.9850);font-family:"Liberation Sans";-webkit-text-stroke:0.12px #000'>?</div>
<div class='t' style='left:390.07px;top:379.21px;font-size:13.4px;line-height:13.4px;color:#000;font-weight:400;transform:scaleX(0.9850);font-family:"Liberation Sans";-webkit-text-stroke:0.12px #000'>12 pack of golf balls</div>
<div class='t' style='left:579.55px;top:379.21px;font-size:13.4px;line-height:13.4px;color:#000;font-weight:400;transform:scaleX(0.9850);font-family:"Liberation Sans";-webkit-text-stroke:0.12px #000'>$29.99</div>
<div class='t' style='left:729.55px;top:379.21px;font-size:13.4px;line-height:13.4px;color:#000;font-weight:400;transform:scaleX(0.9850);font-family:"Liberation Sans";-webkit-text-stroke:0.12px #000'>$19.99</div>
<div class='t' style='left:896.05px;top:379.21px;font-size:13.4px;line-height:13.4px;color:#000;font-weight:400;transform:scaleX(0.9850);font-family:"Liberation Sans";-webkit-text-stroke:0.12px #000'>?</div>
<div class='t' style='left:409.51px;top:397.71px;font-size:13.4px;line-height:13.4px;color:#000;font-weight:400;transform:scaleX(0.9850);font-family:"Liberation Sans";-webkit-text-stroke:0.12px #000'>Exercise bike</div>
<div class='t' style='left:572.21px;top:397.71px;font-size:13.4px;line-height:13.4px;color:#000;font-weight:400;transform:scaleX(0.9850);font-family:"Liberation Sans";-webkit-text-stroke:0.12px #000'>$1099.00</div>
<div class='t' style='left:725.88px;top:397.71px;font-size:13.4px;line-height:13.4px;color:#000;font-weight:400;transform:scaleX(0.9850);font-family:"Liberation Sans";-webkit-text-stroke:0.12px #000'>$599.00</div>
<div class='t' style='left:896.05px;top:397.71px;font-size:13.4px;line-height:13.4px;color:#000;font-weight:400;transform:scaleX(0.9850);font-family:"Liberation Sans";-webkit-text-stroke:0.12px #000'>?</div>
<div class='t' style='left:418.07px;top:416.21px;font-size:13.4px;line-height:13.4px;color:#000;font-weight:400;transform:scaleX(0.9850);font-family:"Liberation Sans";-webkit-text-stroke:0.12px #000'>Basketball</div>
<div class='t' style='left:579.55px;top:416.21px;font-size:13.4px;line-height:13.4px;color:#000;font-weight:400;transform:scaleX(0.9850);font-family:"Liberation Sans";-webkit-text-stroke:0.12px #000'>$49.99</div>
<div class='t' style='left:729.55px;top:416.21px;font-size:13.4px;line-height:13.4px;color:#000;font-weight:400;transform:scaleX(0.9850);font-family:"Liberation Sans";-webkit-text-stroke:0.12px #000'>$39.99</div>
<div class='t' style='left:896.05px;top:416.21px;font-size:13.4px;line-height:13.4px;color:#000;font-weight:400;transform:scaleX(0.9850);font-family:"Liberation Sans";-webkit-text-stroke:0.12px #000'>?</div>
<div class='t' style='left:411.10px;top:434.71px;font-size:13.4px;line-height:13.4px;color:#000;font-weight:400;transform:scaleX(0.9850);font-family:"Liberation Sans";-webkit-text-stroke:0.12px #000'>Sports socks</div>
<div class='t' style='left:579.55px;top:434.71px;font-size:13.4px;line-height:13.4px;color:#000;font-weight:400;transform:scaleX(0.9850);font-family:"Liberation Sans";-webkit-text-stroke:0.12px #000'>$14.95</div>
<div class='t' style='left:729.55px;top:434.71px;font-size:13.4px;line-height:13.4px;color:#000;font-weight:400;transform:scaleX(0.9850);font-family:"Liberation Sans";-webkit-text-stroke:0.12px #000'>$10.00</div>
<div class='t' style='left:896.05px;top:434.71px;font-size:13.4px;line-height:13.4px;color:#000;font-weight:400;transform:scaleX(0.9850);font-family:"Liberation Sans";-webkit-text-stroke:0.12px #000'>?</div>
<div class='t' style='left:411.34px;top:453.21px;font-size:13.4px;line-height:13.4px;color:#000;font-weight:400;transform:scaleX(0.9850);font-family:"Liberation Sans";-webkit-text-stroke:0.12px #000'>Hockey stick</div>
<div class='t' style='left:575.88px;top:453.21px;font-size:13.4px;line-height:13.4px;color:#000;font-weight:400;transform:scaleX(0.9850);font-family:"Liberation Sans";-webkit-text-stroke:0.12px #000'>$299.00</div>
<div class='t' style='left:725.88px;top:453.21px;font-size:13.4px;line-height:13.4px;color:#000;font-weight:400;transform:scaleX(0.9850);font-family:"Liberation Sans";-webkit-text-stroke:0.12px #000'>$250.00</div>
<div class='t' style='left:896.05px;top:453.21px;font-size:13.4px;line-height:13.4px;color:#000;font-weight:400;transform:scaleX(0.9850);font-family:"Liberation Sans";-webkit-text-stroke:0.12px #000'>?</div>
</body></html>
